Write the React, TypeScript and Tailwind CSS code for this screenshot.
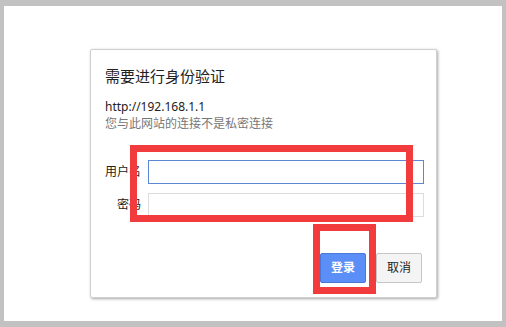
export default function App() {
  const font = { fontFamily: '"Noto Sans", "Noto Sans CJK SC", sans-serif' }
  return (
    <div className="relative w-[506px] h-[327px] bg-[#c2c2c2] pt-[6px] pb-[6px] pl-[4px] pr-[4px]" style={font}>
      <div className="w-full h-full bg-white pl-[86px] pt-[43px]">
        <div className="box-border w-[347px] h-[249px] bg-white border border-[#d0d0d0] rounded-[2px] shadow-[1px_1px_3px_rgba(0,0,0,0.35)] pl-[14px] pr-[12px] pt-[16px] flex flex-col">
          <h1 className="text-[15px] leading-[20px] text-[#222]">需要进行身份验证</h1>
          <div className="mt-[12px] text-[12px] leading-[17px] text-[#222]">http://192.168.1.1</div>
          <div className="text-[12px] leading-[17px] text-[#777]">您与此网站的连接不是私密连接</div>

          <div className="mt-[28px] flex items-center gap-[7px]">
            <label className="w-[36px] shrink-0 text-right text-[12px] text-[#222] whitespace-nowrap">用户名</label>
            <input className="flex-1 h-[24px] border border-[#5b87d3] outline-none px-1 text-[12px]" />
          </div>
          <div className="mt-[9px] flex items-center gap-[7px]">
            <label className="w-[36px] shrink-0 text-right text-[12px] text-[#222] whitespace-nowrap">密码</label>
            <input type="password" className="flex-1 h-[24px] border border-[#dcdcdc] outline-none px-1 text-[12px]" />
          </div>

          <div className="mt-[36px] flex justify-end gap-[10px] pr-[2px]">
            <button className="w-[46px] h-[30px] rounded-[2px] bg-[#5b8ef7] border border-[#4a78d8] text-white text-[12px] font-bold">登录</button>
            <button className="w-[46px] h-[30px] rounded-[2px] bg-[#f4f4f4] border border-[#c6c6c6] text-[#222] text-[12px]">取消</button>
          </div>
        </div>
      </div>

      {/* red annotation boxes */}
      <div className="absolute left-[130px] top-[145px] w-[283px] h-[77px] border-[7px] border-[#f23b3d]" />
      <div className="absolute left-[313px] top-[224px] w-[63px] h-[70px] border-[7px] border-[#f23b3d]" />
    </div>
  )
}
